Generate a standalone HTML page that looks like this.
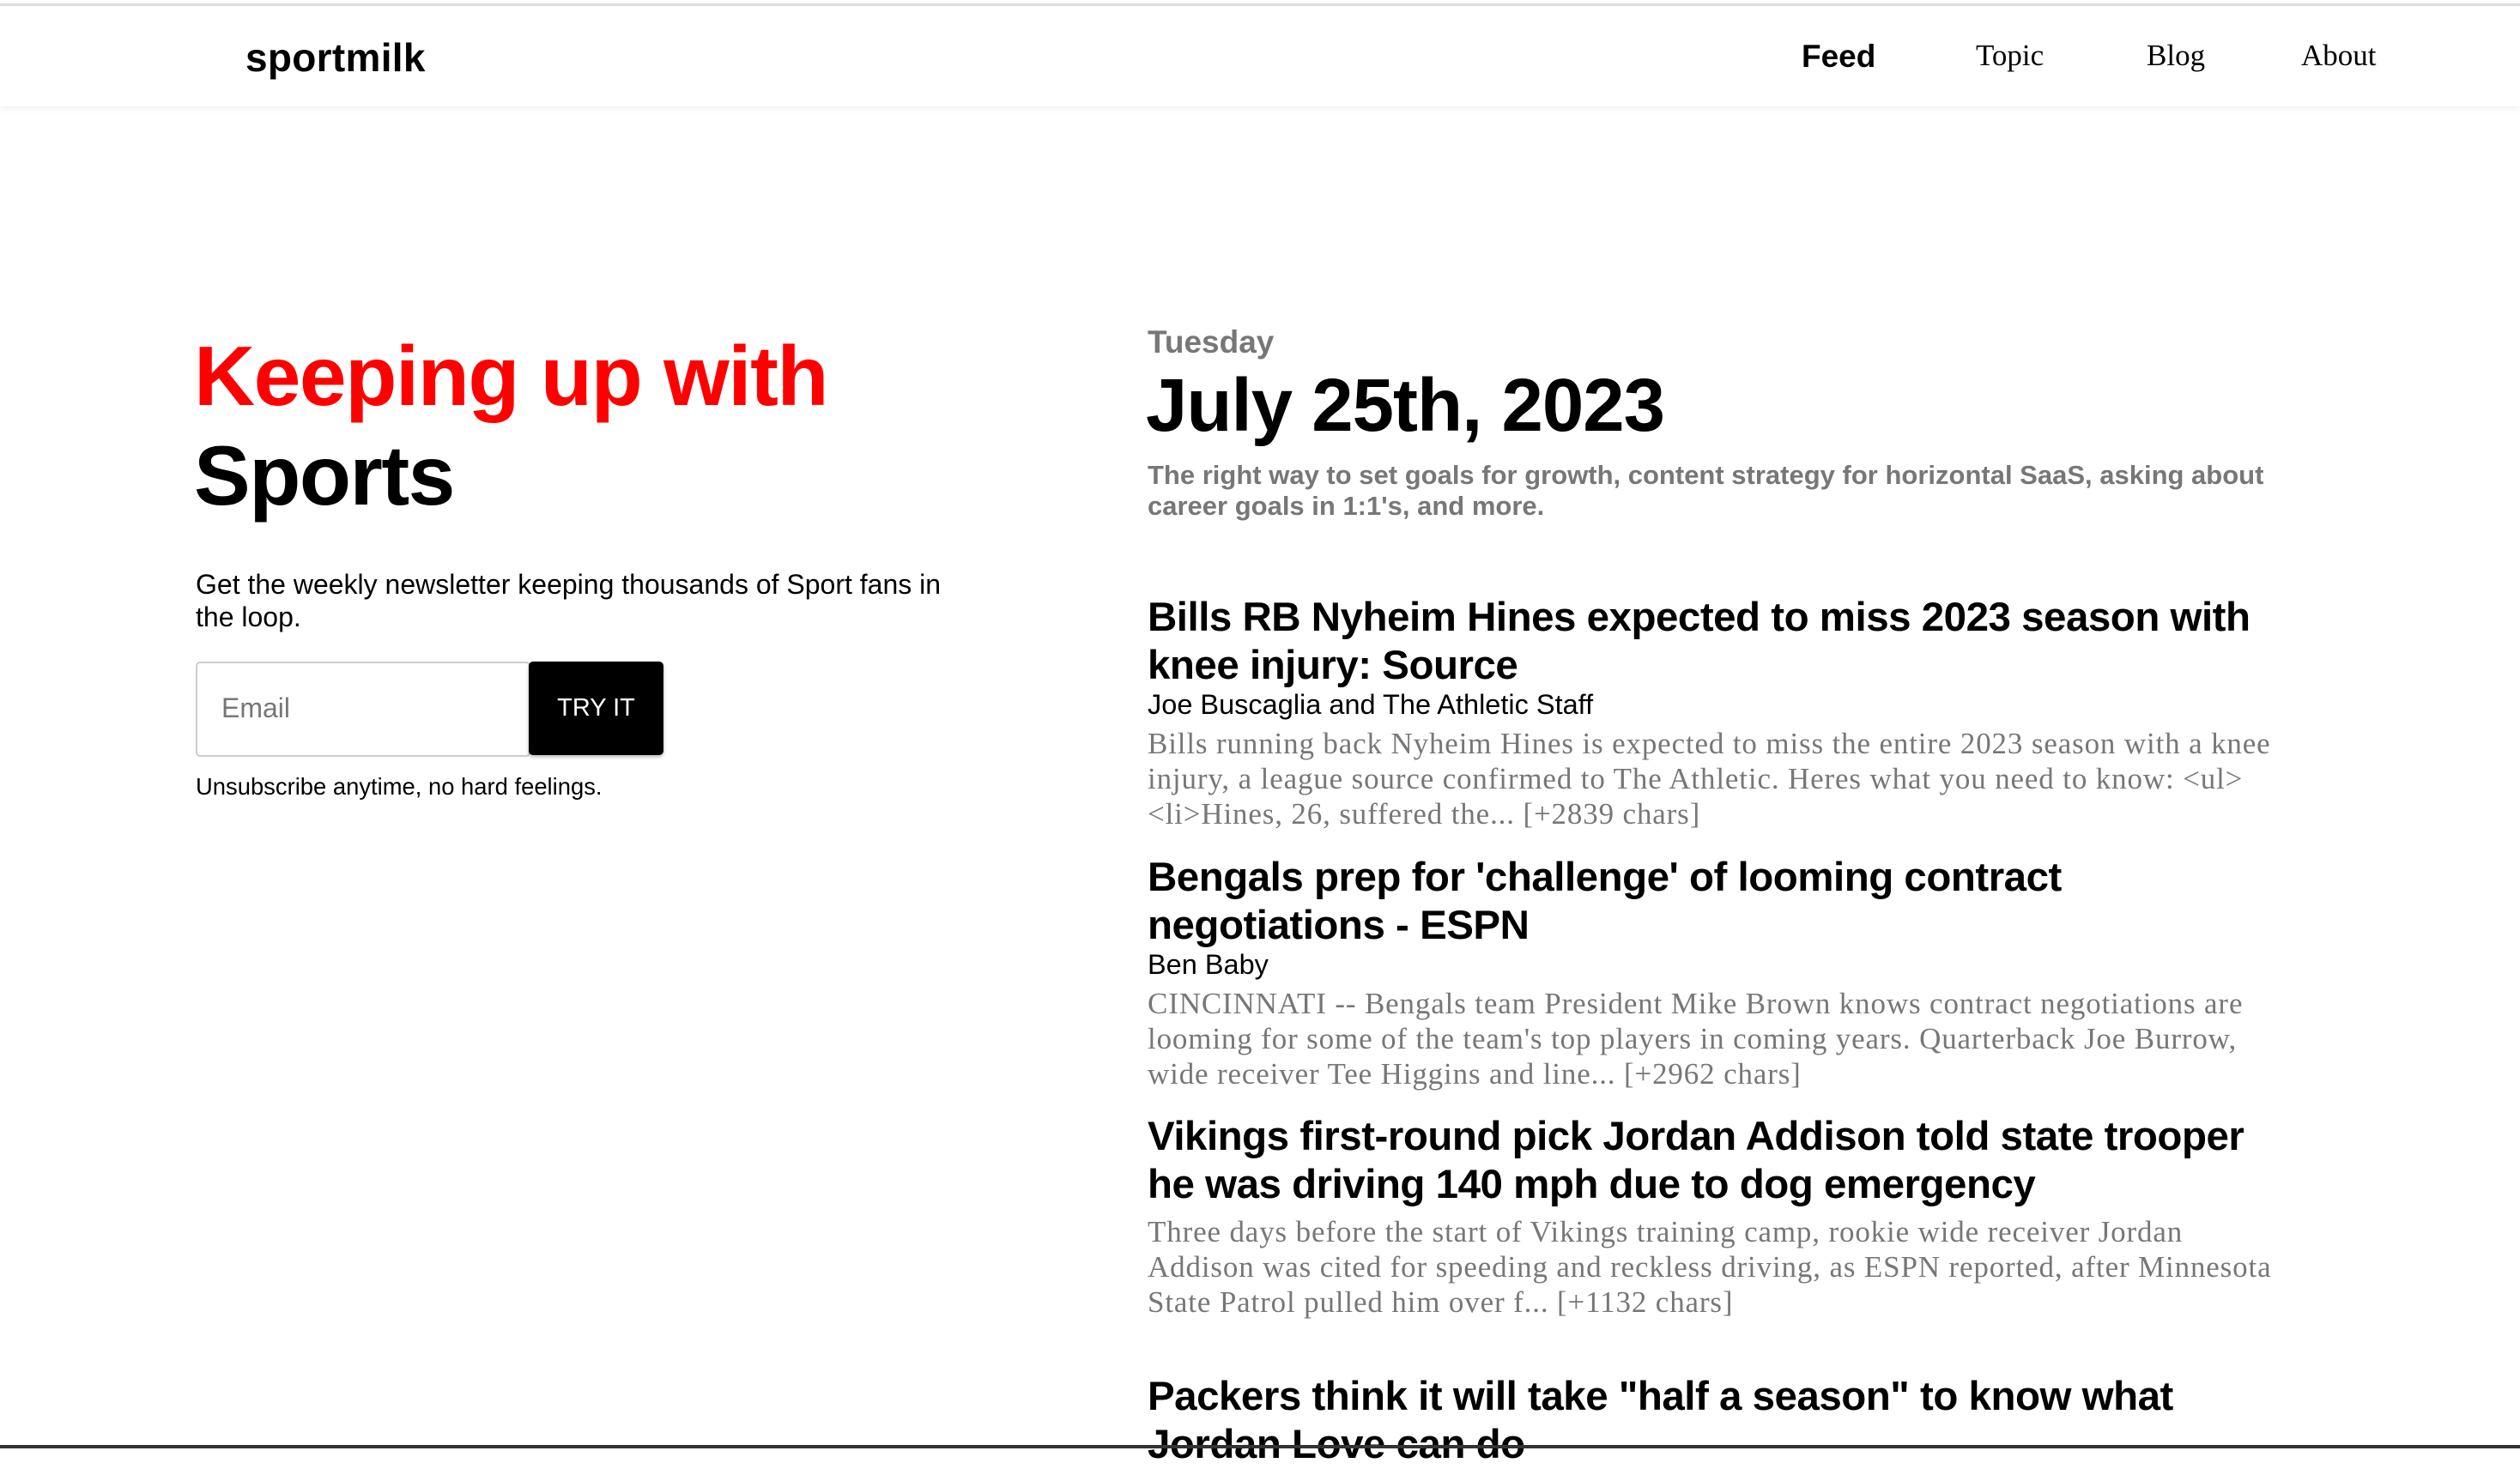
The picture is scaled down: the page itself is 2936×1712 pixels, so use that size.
<!DOCTYPE html>
<html><head><meta charset="utf-8"><style>
*{margin:0;padding:0;box-sizing:border-box}
html,body{width:2936px;height:1688px;overflow:hidden;background:#fff;font-family:"Liberation Sans",sans-serif;color:#000}
.a{position:absolute;white-space:nowrap}
.hdr{position:absolute;left:0;top:4px;width:2936px;height:120px;border-top:3px solid #ddd;box-shadow:0 3px 8px rgba(0,0,0,.06);background:#fff}
.nav{font-family:"Liberation Serif",serif;font-size:35px}
.t{font-weight:bold;font-size:47.5px;letter-spacing:-0.5px;line-height:56px}
.au{font-size:32.5px;line-height:38px}
.b{font-family:"Liberation Serif",serif;color:#777;font-size:35px;letter-spacing:0.85px;line-height:41px}
</style></head><body>
<div class="hdr"></div>
<div class="a" style="left:286px;top:40px;font-size:46px;font-weight:bold;letter-spacing:0.3px">sportmilk</div>
<div class="a" style="left:2099px;top:45px;font-size:37px;font-weight:bold">Feed</div>
<div class="a nav" style="left:2302px;top:45px">Topic</div>
<div class="a nav" style="left:2501px;top:45px">Blog</div>
<div class="a nav" style="left:2681px;top:45px">About</div>

<div class="a" style="left:226px;top:380px;font-size:98.5px;font-weight:bold;letter-spacing:-1.5px;line-height:116px;color:#f00">Keeping up with</div>
<div class="a" style="left:226px;top:496px;font-size:98.5px;font-weight:bold;letter-spacing:-1.5px;line-height:116px">Sports</div>
<div class="a" style="left:228px;top:662px;font-size:32px;line-height:38px;white-space:normal;width:1130px">Get the weekly newsletter keeping thousands of Sport fans in<br>the loop.</div>
<div class="a" style="left:228px;top:771px;width:390px;height:111px;border:2px solid #ccc;border-radius:5px;font-size:32px;color:#777;padding:34px 0 0 28px">Email</div>
<div class="a" style="left:616px;top:771px;width:157px;height:109px;background:#000;border-radius:5px;color:#fff;font-size:29px;text-align:center;line-height:109px;box-shadow:0 2px 4px rgba(0,0,0,.3)">TRY IT</div>
<div class="a" style="left:228px;top:901px;font-size:27.4px">Unsubscribe anytime, no hard feelings.</div>

<div class="a" style="left:1337px;top:378px;font-size:37px;font-weight:bold;color:#777">Tuesday</div>
<div class="a" style="left:1335px;top:423px;font-size:87px;font-weight:bold;letter-spacing:-1px">July 25th, 2023</div>
<div class="a" style="left:1337px;top:536px;font-size:31px;font-weight:bold;color:#777;line-height:36px">The right way to set goals for growth, content strategy for horizontal SaaS, asking about<br>career goals in 1:1's, and more.</div>

<div class="a t" style="left:1337px;top:692px">Bills RB Nyheim Hines expected to miss 2023 season with<br>knee injury: Source</div>
<div class="a au" style="left:1337px;top:802px">Joe Buscaglia and The Athletic Staff</div>
<div class="a b" style="left:1337px;top:846px">Bills running back Nyheim Hines is expected to miss the entire 2023 season with a knee<br>injury, a league source confirmed to The Athletic. Heres what you need to know: &lt;ul&gt;<br>&lt;li&gt;Hines, 26, suffered the... [+2839 chars]</div>

<div class="a t" style="left:1337px;top:995px">Bengals prep for 'challenge' of looming contract<br>negotiations - ESPN</div>
<div class="a au" style="left:1337px;top:1105px">Ben Baby</div>
<div class="a b" style="left:1337px;top:1149px">CINCINNATI -- Bengals team President Mike Brown knows contract negotiations are<br>looming for some of the team's top players in coming years. Quarterback Joe Burrow,<br>wide receiver Tee Higgins and line... [+2962 chars]</div>

<div class="a t" style="left:1337px;top:1297px">Vikings first-round pick Jordan Addison told state trooper<br>he was driving 140 mph due to dog emergency</div>
<div class="a b" style="left:1337px;top:1415px">Three days before the start of Vikings training camp, rookie wide receiver Jordan<br>Addison was cited for speeding and reckless driving, as ESPN reported, after Minnesota<br>State Patrol pulled him over f... [+1132 chars]</div>

<div class="a t" style="left:1337px;top:1600px">Packers think it will take "half a season" to know what<br>Jordan Love can do</div>
<div class="a" style="left:0;top:1684px;width:2936px;height:4px;background:#333"></div>
</body></html>
